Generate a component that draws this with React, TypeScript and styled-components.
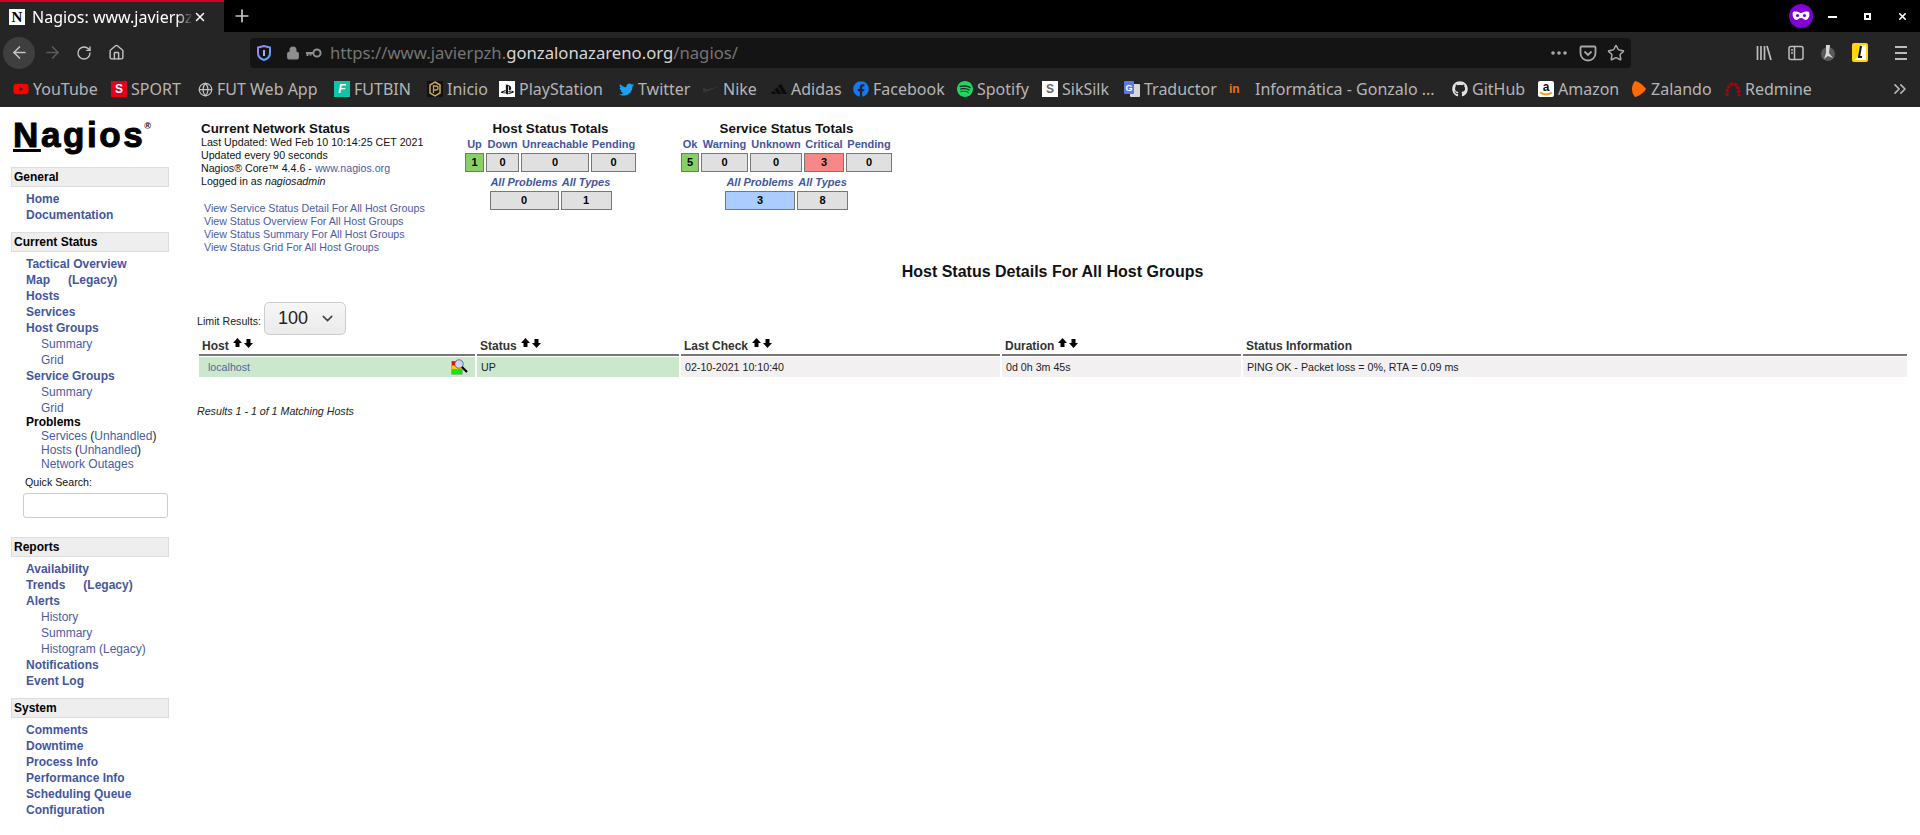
import React from 'react';
import styled, { createGlobalStyle } from 'styled-components';
import { ArrowLeft, ArrowRight, RotateCw, Home, Lock, Star, Plus, X, ChevronsRight, ChevronDown, Globe } from 'lucide-react';
import { FaYoutube, FaTwitter, FaFacebook, FaGithub, FaPlaystation } from 'react-icons/fa';
import { SiNike, SiAdidas, SiSpotify } from 'react-icons/si';

const GlobalStyle = createGlobalStyle`
  html, body {
    margin: 0;
    height: 835px;
    overflow: hidden;
    background: #fff;
    font-family: "Liberation Sans", Arial, sans-serif;
  }
`;

const TabBar = styled.div`
  height: 32px;
  background: #000;
  display: flex;
  align-items: center;
  color: #fff;
  font-family: "Noto Sans", sans-serif;
`;

const Tab = styled.div`
  width: 224px;
  height: 32px;
  box-sizing: border-box;
  background: #252525;
  border-top: 2px solid #d70022;
  display: flex;
  align-items: center;
  padding-left: 9px;
  font-size: 16px;
`;

const TabIcon = styled.span`
  width: 16px;
  height: 16px;
  background: #fff;
  color: #000;
  font: bold 15px/16px "Liberation Serif", serif;
  text-align: center;
  flex: none;
`;

const TabTitle = styled.span`
  width: 161px;
  margin-left: 7px;
  overflow: hidden;
  white-space: nowrap;
  -webkit-mask-image: linear-gradient(to right, #000 90%, transparent);
  mask-image: linear-gradient(to right, #000 90%, transparent);
`;

const NewTab = styled.span`
  margin-left: 8px;
  display: flex;
`;

const Spacer = styled.div`
  flex: 1;
`;

const MaskBadge = styled.span`
  width: 24px;
  height: 24px;
  border-radius: 50%;
  background: #8000d7;
  display: flex;
  align-items: center;
  justify-content: center;
  margin-right: 2px;
`;

const WindowButton = styled.span`
  width: 35px;
  height: 16px;
  display: flex;
  align-items: center;
  justify-content: center;
`;

const Toolbar = styled.div`
  height: 41px;
  background: #252525;
  display: flex;
  align-items: center;
  padding-left: 3px;
  color: #bdbdbd;
`;

const NavButton = styled.span<{ $active?: boolean; $dim?: boolean; $gap?: number }>`
  width: 32px;
  height: 32px;
  margin-left: ${(p) => p.$gap ?? 0}px;
  border-radius: 50%;
  display: flex;
  align-items: center;
  justify-content: center;
  background: ${(p) => (p.$active ? '#3f3f3f' : 'transparent')};
  color: ${(p) => (p.$dim ? '#5c5c5c' : '#c4c4c4')};
  flex: none;
`;

const UrlBar = styled.div`
  width: 1381px;
  height: 30px;
  margin-left: 118px;
  background: #141414;
  border-radius: 4px;
  display: flex;
  align-items: center;
  padding: 0 6px 0 7px;
  box-sizing: border-box;
  flex: none;
  color: #8f8f8f;
`;

const LockSlot = styled.span`
  margin-left: 15px;
  display: flex;
`;

const KeySlot = styled.span`
  margin-left: 5px;
  display: flex;
`;

const UrlText = styled.div`
  margin-left: 8px;
  font: 16.7px/30px "Noto Sans", sans-serif;
  color: #757575;
  white-space: nowrap;
  flex: 1;
  strong {
    font-weight: 400;
    color: #d6d6d6;
  }
`;

const MoreDots = styled.svg`
  margin-right: 12px;
`;

const StarSlot = styled.span`
  margin-left: 10px;
  display: flex;
`;

const ToolIcons = styled.div`
  display: flex;
  align-items: center;
  margin-left: 123px;
  gap: 12px;
`;

const ToolIcon = styled.span<{ $gap?: number }>`
  width: 20px;
  height: 20px;
  margin-left: ${(p) => p.$gap ?? 0}px;
  display: flex;
  align-items: center;
  justify-content: center;
`;

const BookmarkBar = styled.div`
  height: 34px;
  box-sizing: border-box;
  padding: 0 0 2px 13px;
  background: #252525;
  display: flex;
  align-items: center;
  color: #b5b5b5;
  font: 16px/20px "Noto Sans", sans-serif;
  position: relative;
`;

const Bookmark = styled.div<{ $w: number }>`
  width: ${(p) => p.$w}px;
  flex: none;
  display: flex;
  align-items: center;
  gap: 4px;
  white-space: nowrap;
`;

const Fav = styled.span<{ $bg?: string; $fg?: string; $w?: number }>`
  width: ${(p) => p.$w ?? 16}px;
  height: 16px;
  flex: none;
  display: flex;
  align-items: center;
  justify-content: ${(p) => (p.$w ? 'flex-start' : 'center')};
  background: ${(p) => p.$bg ?? 'transparent'};
  color: ${(p) => p.$fg ?? '#bfbfbf'};
  font: bold 12px/16px "Liberation Sans", sans-serif;
`;

const Overflow = styled.span`
  position: absolute;
  right: 10px;
  top: 6px;
  display: flex;
`;

const Page = styled.div`
  display: flex;
  height: 728px;
  background: #fff;
  overflow: hidden;
`;

const Sidebar = styled.nav`
  width: 158px;
  flex: none;
  margin-left: 11px;
`;

const Logo = styled.div`
  height: 56px;
  padding: 4px 0 0 2px;
  color: #000;
  font: bold 35px/47px "Liberation Sans", sans-serif;
  letter-spacing: 2.6px;
  -webkit-text-stroke: 1px #000;
  white-space: nowrap;
  display: flex;
  align-items: flex-start;
  u {
    text-decoration-thickness: 3px;
    text-underline-offset: 2px;
  }
  sup {
    font-size: 9px;
    line-height: 30px;
    letter-spacing: 0;
    -webkit-text-stroke: 0;
    margin-left: -1px;
  }
`;

const SectionHeader = styled.div`
  height: 20px;
  box-sizing: border-box;
  background: #eee;
  border: 1px solid #ddd;
  padding-left: 2px;
  font: bold 12px/18px "Liberation Sans", sans-serif;
  color: #000;
`;

const NavList = styled.div<{ $after?: number }>`
  padding: 4px 0 0 15px;
  margin-bottom: ${(p) => p.$after ?? 9}px;
  font-size: 12px;
  line-height: 16px;
`;

const NavLink = styled.a<{ $gap?: number }>`
  display: block;
  font-weight: 700;
  color: #44569f;
  white-space: nowrap;
  span {
    margin-left: ${(p) => p.$gap ?? 0}px;
  }
`;

const SubLink = styled.a`
  display: block;
  padding-left: 15px;
  font-weight: 400;
  color: #4a5ca6;
`;

const ProblemTitle = styled.div`
  font-weight: 700;
  line-height: 14px;
  color: #000;
  margin-top: -1px;
`;

const ProblemRow = styled.div`
  padding-left: 15px;
  line-height: 14px;
  color: #222;
  a {
    color: #4a5ca6;
  }
`;

const QuickLabel = styled.div`
  margin: 4px 0 4px -1px;
  font-size: 8pt;
  line-height: 14px;
  color: #111;
`;

const QuickInput = styled.input`
  display: block;
  box-sizing: border-box;
  width: 145px;
  height: 25px;
  margin-left: -3px;
  border: 1px solid #ccc;
  border-radius: 3px;
  background: #fff;
`;

const Main = styled.main`
  flex: 1;
  min-width: 0;
  padding-left: 28px;
`;

const TopRow = styled.div`
  display: flex;
  height: 155px;
  padding: 15px 0 0 4px;
  box-sizing: border-box;
`;

const InfoBlock = styled.div`
  width: 264px;
  flex: none;
  font-size: 8pt;
  line-height: 13px;
  color: #111;
  a {
    color: #4a5ca6;
  }
`;

const InfoTitle = styled.div`
  font-size: 10pt;
  line-height: 14px;
  font-weight: 700;
`;

const ViewLinks = styled.div`
  margin: 14px 0 0 3px;
  a {
    display: block;
  }
`;

const Totals = styled.div<{ $w: number; $after?: number }>`
  width: ${(p) => p.$w}px;
  margin-right: ${(p) => p.$after ?? 0}px;
  flex: none;
`;

const TotalsTitle = styled.div`
  height: 12px;
  font-size: 10pt;
  line-height: 14px;
  font-weight: 700;
  text-align: center;
  color: #111;
  white-space: nowrap;
`;

const TotalsRow = styled.div`
  display: flex;
  justify-content: center;
  gap: 2px;
  margin-top: 2px;
`;

const TotalColumn = styled.div<{ $w: number }>`
  width: ${(p) => p.$w}px;
  display: flex;
  flex-direction: column;
  align-items: center;
`;

const TotalLabel = styled.a<{ $italic?: boolean }>`
  height: 17px;
  font-size: 11px;
  line-height: 16px;
  font-weight: 700;
  font-style: ${(p) => (p.$italic ? 'italic' : 'normal')};
  color: #44569f;
  white-space: nowrap;
`;

const TotalCell = styled.div<{ $bg?: string }>`
  width: 100%;
  height: 19px;
  box-sizing: border-box;
  border: 1px solid #777;
  background: ${(p) => p.$bg ?? '#e0e0e0'};
  font-size: 11px;
  line-height: 17px;
  font-weight: 700;
  text-align: center;
  color: #000;
`;

const PageTitle = styled.h1`
  margin: 0;
  height: 20px;
  padding-right: 12px;
  font-size: 16px;
  line-height: 20px;
  font-weight: 700;
  text-align: center;
  color: #111;
`;

const LimitRow = styled.div`
  display: flex;
  align-items: center;
  height: 33px;
  margin-top: 20px;
  font-size: 8pt;
  color: #222;
`;

const LimitLabel = styled.span`
  margin-top: 4px;
`;

const LimitSelect = styled.div`
  width: 82px;
  height: 33px;
  box-sizing: border-box;
  margin-left: 3px;
  padding: 0 9px 0 13px;
  display: flex;
  align-items: center;
  justify-content: space-between;
  border: 1px solid #ccc;
  border-radius: 5px;
  background: linear-gradient(#f6f6f6, #ebebeb);
  font-size: 18px;
  color: #222;
`;

const StatusGrid = styled.div`
  display: grid;
  grid-template-columns: 276px 202px 319px 239px 664px;
  column-gap: 2px;
  margin: 2px 0 0 2px;
`;

const HeadCell = styled.div`
  height: 19px;
  box-sizing: border-box;
  border-bottom: 2px solid #777;
  padding-left: 3px;
  display: flex;
  align-items: flex-start;
  gap: 4px;
  font-size: 12px;
  line-height: 18px;
  font-weight: 700;
  color: #333;
`;

const SortArrows = styled.svg`
  margin-top: 1px;
  flex: none;
`;

const RowCell = styled.div<{ $bg?: string }>`
  height: 20px;
  margin-top: 1px;
  padding-left: 4px;
  display: flex;
  align-items: center;
  justify-content: space-between;
  background: ${(p) => p.$bg ?? '#f2f0f1'};
  font-size: 8pt;
  color: #222;
  a {
    margin-left: 5px;
    color: #52689f;
  }
  svg {
    margin-right: 7px;
  }
`;

const ResultNote = styled.div`
  margin-top: 27px;
  font-size: 8pt;
  line-height: 14px;
  font-style: italic;
  color: #222;
`;

const KeyIcon = () => (
  <svg width="17" height="10" viewBox="0 0 17 10" fill="none" stroke="#8f8f8f" strokeWidth="2">
    <circle cx="12" cy="5" r="3.6" />
    <path d="M8 5H1M2.5 5v3M5.5 5v2.5" />
  </svg>
);

const PocketIcon = () => (
  <svg width="18" height="18" viewBox="0 0 18 18" fill="none" stroke="#a8a8a8" strokeWidth="1.8">
    <path d="M2.5 2.5h13a1 1 0 0 1 1 1V9a7.5 7.5 0 0 1-15 0V3.5a1 1 0 0 1 1-1z" />
    <path d="M5.5 7.5L9 11l3.5-3.5" />
  </svg>
);

const LibraryIcon = () => (
  <svg width="16" height="16" viewBox="0 0 16 16" stroke="#bdbdbd" strokeWidth="1.7" fill="none">
    <path d="M1.5 1v14M5 1v14M8.5 1v14M11 1l4 14" />
  </svg>
);

const SidebarIcon = () => (
  <svg width="16" height="16" viewBox="0 0 16 16" stroke="#bdbdbd" strokeWidth="1.5" fill="none">
    <rect x="1" y="1.5" width="14" height="13" rx="2" />
    <path d="M6.5 2v12M3 5h2M3 8h2" />
  </svg>
);

const ExtensionIcon = () => (
  <svg width="16" height="18" viewBox="0 0 16 18">
    <circle cx="8" cy="10" r="7" fill="#5a5a5a" />
    <path d="M6 1h4l-1 8 4 5-5-2-4 3 2-6z" fill="#d8d8d8" />
  </svg>
);

const YellowIcon = () => (
  <svg width="16" height="19" viewBox="0 0 16 19">
    <rect width="16" height="19" rx="2" fill="#ffd60a" />
    <path d="M9 2h5v15H2l4-3h2z" fill="#fff" />
    <path d="M9 3L7 14h3" stroke="#111" strokeWidth="2" fill="none" />
  </svg>
);

const MenuIcon = () => (
  <svg width="16" height="16" viewBox="0 0 16 16" stroke="#bdbdbd" strokeWidth="2">
    <path d="M2 2h12M2 8h12M2 14h12" />
  </svg>
);

const ShieldIcon = () => (
  <svg width="14" height="16" viewBox="0 0 14 16" fill="none">
    <path d="M1 2.5L7 1l6 1.5V8c0 3.5-2.5 6-6 7-3.5-1-6-3.5-6-7z" stroke="url(#shieldFill)" strokeWidth="2" />
    <path d="M6.2 5h1.6v6H6.2z" fill="#cfd8ff" />
    <defs>
      <linearGradient id="shieldFill" x1="0" y1="0" x2="1" y2="1">
        <stop offset="0" stopColor="#a77bff" />
        <stop offset="1" stopColor="#3fb2ff" />
      </linearGradient>
    </defs>
  </svg>
);

const SortPair = () => (
  <SortArrows width="20" height="11" viewBox="0 0 20 11" fill="#000">
    <path d="M4.5 0L9 5H6.5v4h-4V5H0zM15.5 10L20 5h-2.5V1h-4v4H11z" />
  </SortArrows>
);

const ExtInfoIcon = () => (
  <svg width="17" height="16" viewBox="0 0 17 16">
    <rect x="0.5" y="2" width="11" height="13.5" fill="#777" />
    <rect x="1" y="2.5" width="10" height="4" fill="#f00" />
    <rect x="1" y="6.5" width="10" height="4" fill="#fc0" />
    <rect x="1" y="10.5" width="10" height="4.5" fill="#0e0" />
    <circle cx="8" cy="5" r="4.2" fill="#cfcfff" stroke="#555" strokeWidth="0.8" />
    <path d="M11 8l5 5" stroke="#000" strokeWidth="2.2" />
  </svg>
);

const InicioIcon = () => (
  <svg width="16" height="16" viewBox="0 0 16 16">
    <rect width="16" height="16" fill="#111" />
    <path d="M8 1l5 3v8l-5 3-5-3V4z" fill="none" stroke="#c9a659" strokeWidth="1.5" />
    <path d="M6.5 12V5h2.5a2 2 0 0 1 0 4H6.5" fill="none" stroke="#c9a659" strokeWidth="1.3" />
  </svg>
);

const TraductorIcon = () => (
  <svg width="16" height="16" viewBox="0 0 16 16">
    <rect x="6" y="3" width="10" height="13" rx="1" fill="#d8d8d8" />
    <rect width="10" height="13" rx="1" fill="#5b78e5" />
    <text x="5" y="10" fontSize="9" fontWeight="700" fill="#fff" textAnchor="middle" fontFamily="Liberation Sans">G</text>
  </svg>
);

const AmazonIcon = () => (
  <svg width="16" height="16" viewBox="0 0 16 16">
    <rect width="16" height="16" rx="2" fill="#fff" />
    <text x="8" y="10" fontSize="12" fontWeight="700" fill="#111" textAnchor="middle" fontFamily="Liberation Sans">a</text>
    <path d="M2 11.5c3.5 2.5 8.5 2.5 12 0" fill="none" stroke="#f90" strokeWidth="1.6" />
  </svg>
);

const bookmarks: { label: string; w: number; icon: React.ReactNode }[] = [
  { label: 'YouTube', w: 98, icon: <Fav $fg="#f00"><FaYoutube size={16} /></Fav> },
  { label: 'SPORT', w: 86, icon: <Fav $bg="#e2001a" $fg="#fff">S</Fav> },
  { label: 'FUT Web App', w: 137, icon: <Fav><Globe size={15} /></Fav> },
  { label: 'FUTBIN', w: 93, icon: <Fav $bg="#0fc4a7" $fg="#fff"><i>F</i></Fav> },
  { label: 'Inicio', w: 72, icon: <Fav><InicioIcon /></Fav> },
  { label: 'PlayStation', w: 119, icon: <Fav $bg="#fff" $fg="#111"><FaPlaystation size={13} /></Fav> },
  { label: 'Twitter', w: 85, icon: <Fav $fg="#1da1f2"><FaTwitter size={15} /></Fav> },
  { label: 'Nike', w: 68, icon: <Fav $fg="#3a3a3a"><SiNike size={16} /></Fav> },
  { label: 'Adidas', w: 82, icon: <Fav $fg="#0b0b0b"><SiAdidas size={16} /></Fav> },
  { label: 'Facebook', w: 104, icon: <Fav $fg="#1877f2"><FaFacebook size={16} /></Fav> },
  { label: 'Spotify', w: 85, icon: <Fav $fg="#1ed760"><SiSpotify size={16} /></Fav> },
  { label: 'SikSilk', w: 82, icon: <Fav $bg="#fff" $fg="#666">S</Fav> },
  { label: 'Traductor', w: 105, icon: <Fav><TraductorIcon /></Fav> },
  { label: 'Informática - Gonzalo ...', w: 223, icon: <Fav $fg="#e8750a" $w={22}>in</Fav> },
  { label: 'GitHub', w: 86, icon: <Fav $fg="#e0e0e0"><FaGithub size={16} /></Fav> },
  { label: 'Amazon', w: 93, icon: <Fav><AmazonIcon /></Fav> },
  { label: 'Zalando', w: 94, icon: <Fav $fg="#ff6900"><svg width="14" height="16" viewBox="0 0 14 16"><path d="M3 0c5 1 9 5 11 8-2 3-6 7-11 8C1 14 0 11 0 8s1-6 3-8z" fill="currentColor" /></svg></Fav> },
  { label: 'Redmine', w: 90, icon: <Fav $fg="#b00010"><svg width="16" height="16" viewBox="0 0 16 16" fill="none" stroke="currentColor" strokeWidth="3" strokeDasharray="3 1"><path d="M2 15C2 7 4 3 8 3s6 4 6 12" /></svg></Fav> },
];

type Total = { label: string; value: number; w: number; bg?: string };

const hostTotals: Total[] = [
  { label: 'Up', value: 1, w: 19, bg: '#88d066' },
  { label: 'Down', value: 0, w: 33 },
  { label: 'Unreachable', value: 0, w: 68 },
  { label: 'Pending', value: 0, w: 45 },
];
const hostSummary: Total[] = [
  { label: 'All Problems', value: 0, w: 69 },
  { label: 'All Types', value: 1, w: 51 },
];
const serviceTotals: Total[] = [
  { label: 'Ok', value: 5, w: 18, bg: '#88d066' },
  { label: 'Warning', value: 0, w: 47 },
  { label: 'Unknown', value: 0, w: 52 },
  { label: 'Critical', value: 3, w: 40, bg: '#f88888' },
  { label: 'Pending', value: 0, w: 46 },
];
const serviceSummary: Total[] = [
  { label: 'All Problems', value: 3, w: 70, bg: '#aaccff' },
  { label: 'All Types', value: 8, w: 51 },
];

const TotalsLine = ({ items, italic }: { items: Total[]; italic?: boolean }) => (
  <TotalsRow>
    {items.map((t) => (
      <TotalColumn key={t.label} $w={t.w}>
        <TotalLabel $italic={italic}>{t.label}</TotalLabel>
        <TotalCell $bg={t.bg}>{t.value}</TotalCell>
      </TotalColumn>
    ))}
  </TotalsRow>
);

export default function App() {
  return (
    <>
      <GlobalStyle />
      <TabBar>
        <Tab>
          <TabIcon>N</TabIcon>
          <TabTitle>Nagios: www.javierpzh.gonzalonazareno.org</TabTitle>
          <X size={14} strokeWidth={2.5} />
        </Tab>
        <NewTab>
          <Plus size={20} color="#c8c8c8" />
        </NewTab>
        <Spacer />
        <MaskBadge>
          <svg width="18" height="10" viewBox="0 0 18 10">
            <path d="M1 1c3-1 5 0 8 1 3-1 5-2 8-1 1 3 0 7-3 8-2 0-3-2-5-2s-3 2-5 2C1 8 0 4 1 1z" fill="#fff" />
            <circle cx="5.5" cy="4.5" r="1.6" fill="#8000d7" />
            <circle cx="12.5" cy="4.5" r="1.6" fill="#8000d7" />
          </svg>
        </MaskBadge>
        <WindowButton>
          <svg width="9" height="3"><rect width="9" height="2" y="1" fill="#fff" /></svg>
        </WindowButton>
        <WindowButton>
          <svg width="7" height="7"><rect x="1" y="1" width="5" height="5" fill="none" stroke="#fff" strokeWidth="2" /></svg>
        </WindowButton>
        <WindowButton>
          <X size={11} strokeWidth={3.5} />
        </WindowButton>
      </TabBar>

      <Toolbar>
        <NavButton $active><ArrowLeft size={19} /></NavButton>
        <NavButton $dim $gap={1}><ArrowRight size={19} /></NavButton>
        <NavButton><RotateCw size={16} /></NavButton>
        <NavButton><Home size={17} /></NavButton>
        <UrlBar>
          <ShieldIcon />
          <LockSlot><Lock size={14} fill="#8f8f8f" /></LockSlot>
          <KeySlot><KeyIcon /></KeySlot>
          <UrlText>
            https://www.javierpzh.<strong>gonzalonazareno.org</strong>/nagios/
          </UrlText>
          <MoreDots width="16" height="4" viewBox="0 0 16 4" fill="#a8a8a8">
            <circle cx="2" cy="2" r="1.8" /><circle cx="8" cy="2" r="1.8" /><circle cx="14" cy="2" r="1.8" />
          </MoreDots>
          <PocketIcon />
          <StarSlot><Star size={18} strokeWidth={2} color="#a8a8a8" /></StarSlot>
        </UrlBar>
        <ToolIcons>
          <ToolIcon><LibraryIcon /></ToolIcon>
          <ToolIcon><SidebarIcon /></ToolIcon>
          <ToolIcon><ExtensionIcon /></ToolIcon>
          <ToolIcon><YellowIcon /></ToolIcon>
          <ToolIcon $gap={9}><MenuIcon /></ToolIcon>
        </ToolIcons>
      </Toolbar>

      <BookmarkBar>
        {bookmarks.map((b) => (
          <Bookmark key={b.label} $w={b.w}>
            {b.icon}
            {b.label}
          </Bookmark>
        ))}
        <Overflow><ChevronsRight size={20} /></Overflow>
      </BookmarkBar>

      <Page>
        <Sidebar>
          <Logo>
            <u>N</u>agios<sup>®</sup>
          </Logo>
          <SectionHeader>General</SectionHeader>
          <NavList>
            <NavLink>Home</NavLink>
            <NavLink>Documentation</NavLink>
          </NavList>
          <SectionHeader>Current Status</SectionHeader>
          <NavList $after={19}>
            <NavLink>Tactical Overview</NavLink>
            <NavLink $gap={18}>Map<span>(Legacy)</span></NavLink>
            <NavLink>Hosts</NavLink>
            <NavLink>Services</NavLink>
            <NavLink>Host Groups</NavLink>
            <SubLink>Summary</SubLink>
            <SubLink>Grid</SubLink>
            <NavLink>Service Groups</NavLink>
            <SubLink>Summary</SubLink>
            <SubLink>Grid</SubLink>
            <ProblemTitle>Problems</ProblemTitle>
            <ProblemRow><a>Services</a> (<a>Unhandled</a>)</ProblemRow>
            <ProblemRow><a>Hosts</a> (<a>Unhandled</a>)</ProblemRow>
            <ProblemRow><a>Network Outages</a></ProblemRow>
            <QuickLabel>Quick Search:</QuickLabel>
            <QuickInput />
          </NavList>
          <SectionHeader>Reports</SectionHeader>
          <NavList>
            <NavLink>Availability</NavLink>
            <NavLink $gap={18}>Trends<span>(Legacy)</span></NavLink>
            <NavLink>Alerts</NavLink>
            <SubLink>History</SubLink>
            <SubLink>Summary</SubLink>
            <SubLink>Histogram (Legacy)</SubLink>
            <NavLink>Notifications</NavLink>
            <NavLink>Event Log</NavLink>
          </NavList>
          <SectionHeader>System</SectionHeader>
          <NavList>
            <NavLink>Comments</NavLink>
            <NavLink>Downtime</NavLink>
            <NavLink>Process Info</NavLink>
            <NavLink>Performance Info</NavLink>
            <NavLink>Scheduling Queue</NavLink>
            <NavLink>Configuration</NavLink>
          </NavList>
        </Sidebar>

        <Main>
          <TopRow>
            <InfoBlock>
              <InfoTitle>Current Network Status</InfoTitle>
              <div>Last Updated: Wed Feb 10 10:14:25 CET 2021</div>
              <div>Updated every 90 seconds</div>
              <div>Nagios® Core™ 4.4.6 - <a>www.nagios.org</a></div>
              <div>Logged in as <i>nagiosadmin</i></div>
              <ViewLinks>
                <a>View Service Status Detail For All Host Groups</a>
                <a>View Status Overview For All Host Groups</a>
                <a>View Status Summary For All Host Groups</a>
                <a>View Status Grid For All Host Groups</a>
              </ViewLinks>
            </InfoBlock>
            <Totals $w={171} $after={45}>
              <TotalsTitle>Host Status Totals</TotalsTitle>
              <TotalsLine items={hostTotals} />
              <TotalsLine items={hostSummary} italic />
            </Totals>
            <Totals $w={211}>
              <TotalsTitle>Service Status Totals</TotalsTitle>
              <TotalsLine items={serviceTotals} />
              <TotalsLine items={serviceSummary} italic />
            </Totals>
          </TopRow>

          <PageTitle>Host Status Details For All Host Groups</PageTitle>

          <LimitRow>
            <LimitLabel>Limit Results:</LimitLabel>
            <LimitSelect>
              100
              <ChevronDown size={17} strokeWidth={2.2} color="#444" />
            </LimitSelect>
          </LimitRow>

          <StatusGrid>
            <HeadCell>Host <SortPair /></HeadCell>
            <HeadCell>Status <SortPair /></HeadCell>
            <HeadCell>Last Check <SortPair /></HeadCell>
            <HeadCell>Duration <SortPair /></HeadCell>
            <HeadCell>Status Information</HeadCell>
            <RowCell $bg="#cbe7cc"><a>localhost</a><ExtInfoIcon /></RowCell>
            <RowCell $bg="#cbe7cc">UP</RowCell>
            <RowCell>02-10-2021 10:10:40</RowCell>
            <RowCell>0d 0h 3m 45s</RowCell>
            <RowCell>PING OK - Packet loss = 0%, RTA = 0.09 ms</RowCell>
          </StatusGrid>

          <ResultNote>Results 1 - 1 of 1 Matching Hosts</ResultNote>
        </Main>
      </Page>
    </>
  );
}
